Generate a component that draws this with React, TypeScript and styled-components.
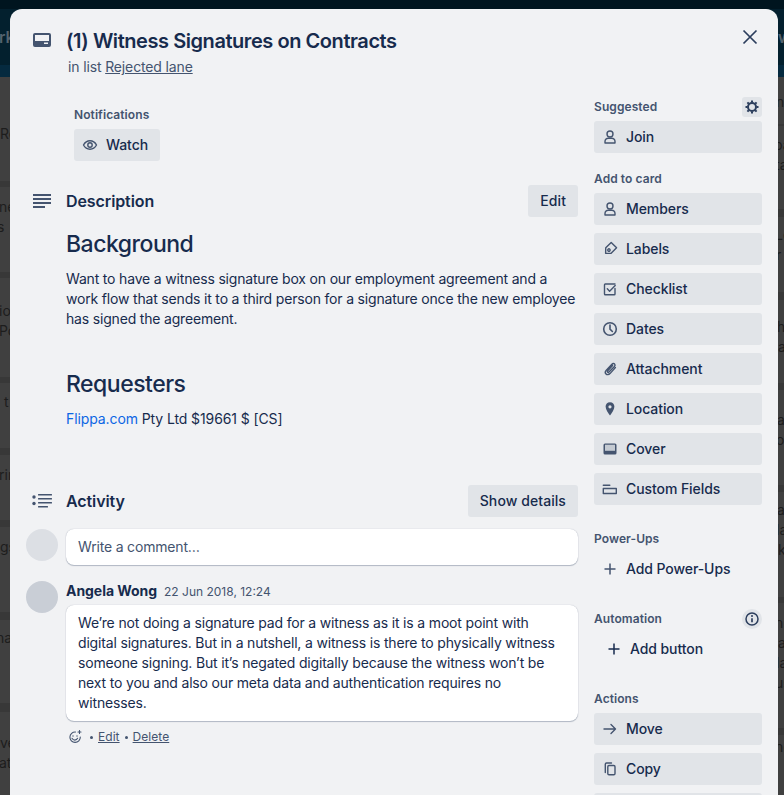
import React from "react";
import styled, { createGlobalStyle } from "styled-components";

const Global = createGlobalStyle`
  html, body { margin: 0; padding: 0; height: 100%; overflow: hidden; background: #3e3e3e; }
  body { font-family: Inter, "Noto Sans", sans-serif; color: #172b4d; font-size: 14px; line-height: 20px; }
  * { box-sizing: border-box; }
`;

/* ---------- dimmed board behind the modal ---------- */
const Page = styled.div`
  position: relative;
  width: 784px;
  height: 795px;
  overflow: hidden;
`;
const Board = styled.div`
  display: flex;
  flex-direction: column;
  height: 100%;
  background: #3f3f3f;
`;
const TopBar = styled.div`
  height: 9px;
  flex: none;
  background: #00151f;
`;
const BoardHeader = styled.div`
  height: 56px;
  flex: none;
  display: flex;
  justify-content: space-between;
  align-items: center;
  background: #03202e;
  color: #54636e;
  font-size: 16px;
  font-weight: 600;
`;
const HeaderLeft = styled.span`
  margin-left: -1px;
`;
const HeaderRight = styled.span`
  width: 6px;
  overflow: hidden;
`;
const BlueBand = styled.div`
  height: 12px;
  flex: none;
  background: #052a3f;
`;
const Lanes = styled.div`
  flex: 1;
  display: flex;
  justify-content: space-between;
  min-height: 0;
`;
const Lane = styled.div<{ $w: number }>`
  width: ${(p) => p.$w}px;
  overflow: hidden;
  display: flex;
  flex-direction: column;
`;
const LaneCard = styled.div<{ $h: number; $top: number; $sep: number }>`
  height: ${(p) => p.$h + p.$sep}px;
  flex: none;
  padding-top: ${(p) => p.$top}px;
  border-bottom: ${(p) => p.$sep}px solid #383838;
  background: #404040;
  color: #1d1d1d;
  white-space: nowrap;
`;
const LaneLine = styled.div<{ $x?: number }>`
  margin-left: ${(p) => p.$x ?? 0}px;
  height: 20px;
`;

type CardData = { h: number; top: number; sep: number; lines: [string, number?][] };

const leftCards: CardData[] = [
  { h: 104, top: 47, sep: 6, lines: [["Re", 0]] },
  { h: 85, top: 10, sep: 6, lines: [["ne", -1], ["s", -3]] },
  { h: 99, top: 23, sep: 6, lines: [["io", -1], ["Po", -1]] },
  { h: 65, top: 9, sep: 7, lines: [["t", 4]] },
  { h: 65, top: 10, sep: 7, lines: [["rin", -1]] },
  { h: 85, top: 10, sep: 8, lines: [["gs", 0]] },
  { h: 83, top: 8, sep: 9, lines: [["na", -4]] },
  { h: 90, top: 21, sep: 0, lines: [["ve", 0], ["at", -1]] },
];
const rightCards: CardData[] = [
  { h: 47, top: 15, sep: 2, lines: [["n", -2]] },
  { h: 83, top: 9, sep: 8, lines: [["pa", -4], ["ta", -3]] },
  { h: 75, top: 8, sep: 8, lines: [["Le", -3], ["r", -2]] },
  { h: 83, top: 17, sep: 7, lines: [["h", -1], ["a", 0]] },
  { h: 95, top: 20, sep: 7, lines: [["a", -1], ["o", -2]] },
  { h: 105, top: 8, sep: 6, lines: [["a", -1], ["la", -2], ["k", 0]] },
  { h: 125, top: 10, sep: 7, lines: [["n", -3], ["a", 0], ["la", -2], ["us", -3]] },
  { h: 60, top: 2, sep: 0, lines: [["nd", -3]] },
];

const BoardLane: React.FC<{ width: number; cards: CardData[] }> = ({ width, cards }) => (
  <Lane $w={width}>
    {cards.map((c, i) => (
      <LaneCard key={i} $h={c.h} $top={c.top} $sep={c.sep}>
        {c.lines.map(([t, x], j) => (
          <LaneLine key={j} $x={x}>
            {t}
          </LaneLine>
        ))}
      </LaneCard>
    ))}
  </Lane>
);

/* ---------- modal ---------- */
const Modal = styled.div`
  position: absolute;
  left: 10px;
  top: 9px;
  width: 768px;
  height: 830px;
  background: #f1f2f4;
  border-radius: 12px;
`;
const CloseButton = styled.button`
  position: absolute;
  top: 12px;
  right: 12px;
  width: 32px;
  height: 32px;
  border: 0;
  padding: 0;
  background: transparent;
  color: #2c3e5d;
  display: flex;
  align-items: center;
  justify-content: center;
`;
const Header = styled.header`
  display: grid;
  grid-template-columns: 56px 1fr;
  padding: 20px 56px 0 0;
  height: 76px;
`;
const HeaderIcon = styled.div`
  color: #44546f;
  display: flex;
  justify-content: flex-end;
  padding: 4px 15px 0 0;
`;
const Title = styled.h1`
  margin: 0;
  font-size: 20px;
  font-weight: 600;
  line-height: 24px;
  letter-spacing: -0.44px;
  color: #172b4d;
`;
const SubTitle = styled.div`
  margin-top: 4px;
  padding-left: 2px;
  font-size: 14px;
  line-height: 20px;
  letter-spacing: -0.14px;
  color: #44546f;
  a {
    color: #44546f;
    text-decoration: underline;
  }
`;
const Columns = styled.div`
  display: flex;
  padding: 0 16px;
  gap: 16px;
`;
const Main = styled.main`
  width: 552px;
  flex: none;
`;
const Side = styled.aside`
  width: 168px;
  flex: none;
  margin-top: 12px;
`;
const Meta = styled.div`
  padding: 20px 0 0 48px;
  height: 100px;
`;
const SmallLabel = styled.h3`
  margin: 0;
  font-size: 12px;
  line-height: 20px;
  font-weight: 600;
  letter-spacing: 0.08px;
  color: #44546f;
`;
const Button = styled.button<{ $flat?: boolean; $inset?: boolean; $w?: string }>`
  display: flex;
  align-items: center;
  gap: 8px;
  height: 32px;
  width: ${(p) => p.$w ?? "auto"};
  border: 0;
  border-radius: 3px;
  padding: 0 12px 0 ${(p) => (p.$inset ? 10 : 6)}px;
  background: ${(p) => (p.$flat ? "transparent" : "#e1e4e8")};
  color: #172b4d;
  font: 500 14px/20px Inter, "Noto Sans", sans-serif;
  letter-spacing: -0.08px;
  text-align: left;
  flex: none;
`;
const WatchButton = styled(Button)`
  margin-top: 4px;
`;
const IconBox = styled.span<{ $dark?: boolean }>`
  width: 16px;
  height: 16px;
  flex: none;
  color: ${(p) => (p.$dark ? "#172b4d" : "#44546f")};
  display: inline-flex;
  align-items: center;
  justify-content: center;
  margin-left: 2px;
`;
const SectionHead = styled.div`
  display: flex;
  align-items: center;
  height: 32px;
`;
const SectionIcon = styled.div`
  width: 40px;
  flex: none;
  color: #44546f;
  display: flex;
  justify-content: center;
  margin-left: -4px;
  margin-right: 4px;
`;
const SectionTitle = styled.h2`
  margin: 0;
  flex: 1;
  font-size: 16px;
  line-height: 20px;
  font-weight: 600;
  letter-spacing: -0.1px;
  color: #172b4d;
`;
const PlainButton = styled.button`
  height: 32px;
  border: 0;
  border-radius: 3px;
  padding: 0 12px;
  background: #e1e4e8;
  color: #172b4d;
  font: 500 14px/20px Inter, "Noto Sans", sans-serif;
  letter-spacing: 0.08px;
`;
const DescBody = styled.div`
  padding: 13px 0 0 40px;
  height: 268px;
`;
const Heading = styled.h1<{ $mt?: number }>`
  margin: ${(p) => p.$mt ?? 0}px 0 0;
  font-size: 23px;
  line-height: 28px;
  font-weight: 500;
  letter-spacing: -0.5px;
  color: #172b4d;
`;
const Para = styled.p<{ $mt: number; $tight?: boolean }>`
  margin: ${(p) => p.$mt}px 0 0;
  font-size: 14px;
  line-height: 20px;
  letter-spacing: ${(p) => (p.$tight ? "-0.18px" : "-0.1px")};
  color: #172b4d;
  a {
    color: #0c66e4;
    text-decoration: none;
  }
`;
const ActivityRow = styled.div<{ $mt: number }>`
  display: grid;
  grid-template-columns: 32px 1fr;
  column-gap: 8px;
  margin-top: ${(p) => p.$mt}px;
`;
const Avatar = styled.div<{ $c: string }>`
  width: 32px;
  height: 32px;
  border-radius: 50%;
  background: ${(p) => p.$c};
`;
const CommentInput = styled.div`
  height: 36px;
  background: #fff;
  border-radius: 8px;
  padding: 8px 12px;
  color: #44546f;
  letter-spacing: -0.18px;
  box-shadow: 0 1px 1px #091e4240, 0 0 1px #091e424f;
`;
const CommentHead = styled.div`
  display: flex;
  align-items: baseline;
  gap: 8px;
  height: 20px;
`;
const Author = styled.span`
  font-size: 14px;
  font-weight: 700;
  letter-spacing: -0.05px;
  color: #172b4d;
`;
const Stamp = styled.span`
  font-size: 12px;
  margin-left: -1px;
  color: #44546f;
`;
const CommentBubble = styled.div`
  margin-top: 4px;
  background: #fff;
  border-radius: 8px;
  padding: 8px 12px;
  height: 116px;
  color: #172b4d;
  letter-spacing: -0.17px;
  box-shadow: 0 1px 1px #091e4240, 0 0 1px #091e424f;
`;
const CommentActions = styled.div`
  display: flex;
  align-items: center;
  margin-top: 6px;
  height: 20px;
  padding-left: 2px;
  font-size: 12px;
  letter-spacing: 0.05px;
  color: #44546f;
  gap: 4px;
  a {
    color: #44546f;
    text-decoration: underline;
  }
`;
const Dot = styled.span`
  width: 3px;
  height: 3px;
  margin: 1px 1px 0;
  border-radius: 50%;
  background: #44546f;
`;
const SmileSlot = styled.span`
  display: inline-flex;
  margin-right: 3px;
`;
const SideHead = styled.div`
  display: flex;
  align-items: center;
  justify-content: space-between;
  height: 20px;
`;
const SideRound = styled.div<{ $round?: boolean }>`
  width: 20px;
  height: 20px;
  border-radius: ${(p) => (p.$round ? "50%" : "3px")};
  background: #e1e4e8;
  color: #2c3e5d;
  display: flex;
  align-items: center;
  justify-content: center;
`;
const SideGroup = styled.div`
  display: flex;
  flex-direction: column;
  gap: 8px;
  margin-top: 4px;
`;
const SideSection = styled.div<{ $mt: number }>`
  margin-top: ${(p) => p.$mt}px;
`;

/* ---------- icons ---------- */
const Svg: React.FC<{ s?: number; children: React.ReactNode }> = ({ s = 16, children }) => (
  <svg width={s} height={s} viewBox={`0 0 ${s} ${s}`} fill="none" stroke="currentColor" strokeWidth="1.4" strokeLinecap="round" strokeLinejoin="round">
    {children}
  </svg>
);

const CardIcon = () => (
  <svg width="18" height="14" viewBox="0 0 18 14" fill="currentColor">
    <path fillRule="evenodd" d="M2 0h14a2 2 0 0 1 2 2v10a2 2 0 0 1-2 2H2a2 2 0 0 1-2-2V2a2 2 0 0 1 2-2Zm0 2v6h14V2H2Zm9 7.500v1.600h4V9.500h-4Z" />
  </svg>
);
const CloseIcon = () => (
  <Svg>
    <path d="M1.500 1.500l13 13M14.500 1.500l-13 13" strokeWidth="1.700" strokeLinecap="butt" />
  </Svg>
);
const EyeIcon = () => (
  <Svg>
    <path d="M1.500 8C3 5.200 5.200 3.800 8 3.800s5 1.400 6.500 4.200c-1.500 2.800-3.700 4.200-6.500 4.200S3 10.800 1.500 8Z" />
    <circle cx="8" cy="8" r="2.200" />
  </Svg>
);
const LinesIcon = () => (
  <svg width="18" height="14" viewBox="0 0 18 14" fill="currentColor">
    <rect y="0" width="18" height="2" />
    <rect y="4" width="18" height="2" />
    <rect y="8" width="18" height="2" />
    <rect y="12" width="12" height="2" />
  </svg>
);
const ActivityIcon = () => (
  <svg width="20" height="14" viewBox="0 0 20 14" fill="currentColor">
    <circle cx="2" cy="3" r="1.700" />
    <circle cx="2" cy="9.500" r="1.700" />
    <rect x="6" y="0" width="14" height="1.600" rx=".5" />
    <rect x="6" y="4" width="14" height="1.600" rx=".5" />
    <rect x="6" y="8" width="14" height="1.600" rx=".5" />
    <rect x="6" y="12" width="10" height="1.600" rx=".5" />
  </svg>
);
const PersonIcon = () => (
  <Svg>
    <circle cx="8" cy="5" r="3" />
    <path d="M3 14v-1.500C3 10.500 4.700 9.200 6.200 9.200h3.600c1.500 0 3.200 1.300 3.200 3.300V14Z" />
  </Svg>
);
const LabelIcon = () => (
  <Svg>
    <g transform="rotate(-45 8 8)">
      <path d="M13.500 4.200H5.800L1.800 8l4 3.800h7.700Z" />
      <circle cx="6.500" cy="8" r="1.200" />
    </g>
  </Svg>
);
const CheckIcon = () => (
  <Svg>
    <path d="M13 7.500V13a.8.8 0 0 1-.8.8H3.300a.8.8 0 0 1-.8-.8V3.800a.8.8 0 0 1 .8-.8H13" />
    <path d="M5.300 7.800l2.300 2.400 5.600-5.600" />
  </Svg>
);
const ClockIcon = () => (
  <Svg>
    <circle cx="8" cy="8" r="6.300" strokeWidth="1.600" />
    <path d="M8 4v4.200l2.400 2.300" strokeWidth="1.600" />
  </Svg>
);
const ClipIcon = () => (
  <Svg>
    <path d="M13.400 6.600 8 12.600c-1.300 1.300-3 1.400-4 .4s-.9-2.500.3-3.800l5.600-6c.9-.9 2-1 2.700-.3s.6 1.700-.2 2.600L7 11c-.5.5-1.100.6-1.400.2s-.3-.9.2-1.500l4.800-5.200" />
  </Svg>
);
const PinIcon = () => (
  <svg width="16" height="16" viewBox="0 0 16 16" fill="currentColor">
    <path fillRule="evenodd" d="M8 1.200c2.700 0 4.400 2 4.400 4.400 0 2.900-2.600 6.600-4.400 9-1.800-2.400-4.400-6.100-4.400-9C3.600 3.200 5.300 1.200 8 1.200Zm0 3a1.600 1.600 0 1 0 0 3.200 1.600 1.600 0 0 0 0-3.200Z" />
  </svg>
);
const CoverIcon = () => (
  <svg width="16" height="16" viewBox="0 0 16 16" fill="currentColor">
    <path fillRule="evenodd" d="M3 2.500h10A1.500 1.500 0 0 1 14.500 4v8a1.500 1.500 0 0 1-1.500 1.500H3A1.500 1.500 0 0 1 1.500 12V4A1.500 1.500 0 0 1 3 2.500Zm0 1.200v6h10v-6H3Z" />
    <rect x="3" y="3.700" width="10" height="6" opacity=".18" />
  </svg>
);
const FieldsIcon = () => (
  <Svg>
    <path d="M1.300 4.300h6.500M1.300 7.500h13v5H1.300Z" />
  </Svg>
);
const PlusIcon = () => (
  <Svg>
    <path d="M8 2.500v11M2.500 8h11" strokeWidth="1.500" strokeLinecap="butt" />
  </Svg>
);
const ArrowIcon = () => (
  <Svg>
    <path d="M2 8h11.500M9 3.500 13.500 8 9 12.500" />
  </Svg>
);
const CopyIcon = () => (
  <Svg>
    <path d="M3.300 11.500V3.200c0-.7.500-1.200 1.200-1.200h5" />
    <rect x="5.800" y="4.500" width="7.200" height="9.300" rx="1.200" />
  </Svg>
);
const GearIcon = () => (
  <svg width="14" height="14" viewBox="0 0 14 14" fill="none" stroke="currentColor">
    <circle cx="7" cy="7" r="4" strokeWidth="2" />
    <path d="M7 .5v2M7 11.500v2M.5 7h2M11.500 7h2M2.400 2.400l1.400 1.400M10.200 10.200l1.400 1.400M2.400 11.600l1.400-1.400M10.200 3.800l1.400-1.400" strokeWidth="2" />
  </svg>
);
const InfoIcon = () => (
  <svg width="14" height="14" viewBox="0 0 14 14" fill="none" stroke="currentColor">
    <circle cx="7" cy="7" r="6" strokeWidth="1.500" />
    <path d="M7 6.200v4" strokeWidth="1.700" />
    <circle cx="7" cy="4" r="1" fill="currentColor" stroke="none" />
  </svg>
);
const SmileIcon = () => (
  <svg width="14" height="14" viewBox="0 0 14 14" fill="none" stroke="currentColor" strokeWidth="1.100" strokeLinecap="round">
    <path d="M7.500 2a5.200 5.200 0 1 0 4.800 5" />
    <path d="M4 8.300c.7 1.200 1.700 1.800 2.800 1.800s2.200-.6 2.800-1.800" />
    <circle cx="5" cy="6" r=".7" fill="currentColor" stroke="none" />
    <circle cx="9" cy="6" r=".7" fill="currentColor" stroke="none" />
    <path d="M11.500.5v3M10 2h3" />
  </svg>
);

const SideBtn: React.FC<{ icon?: React.ReactNode; label?: string; flat?: boolean; inset?: boolean }> = ({ icon, label, flat, inset }) => (
  <Button $flat={flat} $inset={inset} $w="100%">
    <IconBox $dark={inset}>{icon}</IconBox>
    {label}
  </Button>
);

export default function App() {
  return (
    <Page>
      <Global />
      <Board>
        <TopBar />
        <BoardHeader>
          <HeaderLeft>rk</HeaderLeft>
          <HeaderRight>w</HeaderRight>
        </BoardHeader>
        <BlueBand />
        <Lanes>
          <BoardLane width={10} cards={leftCards} />
          <BoardLane width={6} cards={rightCards} />
        </Lanes>
      </Board>
      <Modal>
        <CloseButton aria-label="Close">
          <CloseIcon />
        </CloseButton>
        <Header>
          <HeaderIcon>
            <CardIcon />
          </HeaderIcon>
          <div>
            <Title>(1) Witness Signatures on Contracts</Title>
            <SubTitle>
              in list <a href="#">Rejected lane</a>
            </SubTitle>
          </div>
        </Header>
        <Columns>
          <Main>
            <Meta>
              <SmallLabel>Notifications</SmallLabel>
              <WatchButton>
                <IconBox>
                  <EyeIcon />
                </IconBox>
                Watch
              </WatchButton>
            </Meta>
            <SectionHead>
              <SectionIcon>
                <LinesIcon />
              </SectionIcon>
              <SectionTitle>Description</SectionTitle>
              <PlainButton>Edit</PlainButton>
            </SectionHead>
            <DescBody>
              <Heading>Background</Heading>
              <Para $mt={11} $tight>
                Want to have a witness signature box on our employment agreement and a work flow that sends it to a third person for a signature once the new employee has signed the agreement.
              </Para>
              <Heading $mt={41}>Requesters</Heading>
              <Para $mt={11}>
                <a href="#">Flippa.com</a> Pty Ltd $19661 $ [CS]
              </Para>
            </DescBody>
            <SectionHead>
              <SectionIcon>
                <ActivityIcon />
              </SectionIcon>
              <SectionTitle>Activity</SectionTitle>
              <PlainButton>Show details</PlainButton>
            </SectionHead>
            <ActivityRow $mt={12}>
              <Avatar $c="#dcdfe4" />
              <CommentInput>Write a comment…</CommentInput>
            </ActivityRow>
            <ActivityRow $mt={16}>
              <Avatar $c="#c9ced6" />
              <div>
                <CommentHead>
                  <Author>Angela Wong</Author>
                  <Stamp>22 Jun 2018, 12:24</Stamp>
                </CommentHead>
                <CommentBubble>
                  We’re not doing a signature pad for a witness as it is a moot point with digital signatures. But in a nutshell, a witness is there to physically witness someone signing. But it’s negated digitally because the witness won’t be next to you and also our meta data and authentication requires no witnesses.
                </CommentBubble>
                <CommentActions>
                  <SmileSlot>
                    <SmileIcon />
                  </SmileSlot>
                  <Dot />
                  <a href="#">Edit</a>
                  <Dot />
                  <a href="#">Delete</a>
                </CommentActions>
              </div>
            </ActivityRow>
          </Main>
          <Side>
            <SideHead>
              <SmallLabel>Suggested</SmallLabel>
              <SideRound>
                <GearIcon />
              </SideRound>
            </SideHead>
            <SideGroup>
              <SideBtn icon={<PersonIcon />} label="Join" />
            </SideGroup>
            <SideSection $mt={16}>
              <SmallLabel>Add to card</SmallLabel>
            </SideSection>
            <SideGroup>
              <SideBtn icon={<PersonIcon />} label="Members" />
              <SideBtn icon={<LabelIcon />} label="Labels" />
              <SideBtn icon={<CheckIcon />} label="Checklist" />
              <SideBtn icon={<ClockIcon />} label="Dates" />
              <SideBtn icon={<ClipIcon />} label="Attachment" />
              <SideBtn icon={<PinIcon />} label="Location" />
              <SideBtn icon={<CoverIcon />} label="Cover" />
              <SideBtn icon={<FieldsIcon />} label="Custom Fields" />
            </SideGroup>
            <SideSection $mt={24}>
              <SmallLabel>Power-Ups</SmallLabel>
            </SideSection>
            <SideGroup>
              <SideBtn flat icon={<PlusIcon />} label="Add Power-Ups" />
            </SideGroup>
            <SideSection $mt={24}>
              <SideHead>
                <SmallLabel>Automation</SmallLabel>
                <SideRound $round>
                  <InfoIcon />
                </SideRound>
              </SideHead>
            </SideSection>
            <SideGroup>
              <SideBtn flat inset icon={<PlusIcon />} label="Add button" />
            </SideGroup>
            <SideSection $mt={24}>
              <SmallLabel>Actions</SmallLabel>
            </SideSection>
            <SideGroup>
              <SideBtn icon={<ArrowIcon />} label="Move" />
              <SideBtn icon={<CopyIcon />} label="Copy" />
              <SideBtn />
            </SideGroup>
          </Side>
        </Columns>
      </Modal>
    </Page>
  );
}
